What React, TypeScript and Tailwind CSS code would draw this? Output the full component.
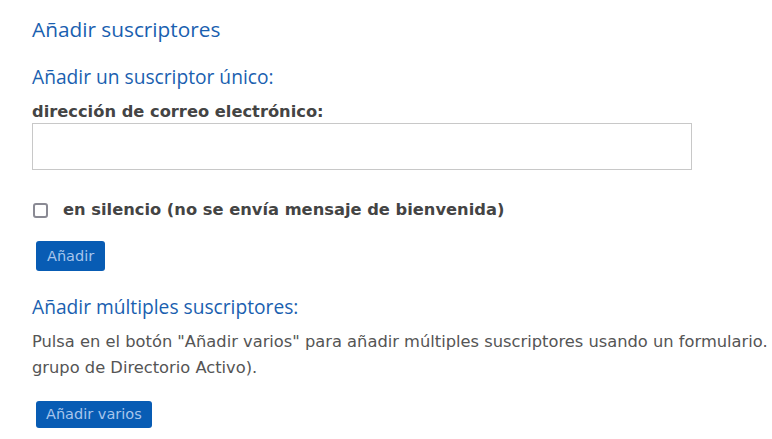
import React from "react";

export default function App() {
  const heading = "text-[#1a5fb0] font-normal [font-family:'Open_Sans',sans-serif]";
  return (
    <div className="w-[772px] h-[439px] overflow-hidden bg-white [font-family:'DejaVu_Sans',sans-serif]">
      <div className="pl-[32px] pt-[14px] w-[1100px]">
        <h1 className={`${heading} text-[20.8px] leading-[30px]`}>Añadir suscriptores</h1>
        <h2 className={`${heading} text-[19.2px] leading-[26px] mt-[20px]`}>Añadir un suscriptor único:</h2>
        <label className="block mt-[12px] text-[16.3px] leading-[20px] font-bold text-[#444]">
          dirección de correo electrónico:
        </label>
        <input
          type="text"
          className="block mt-[1px] w-[660px] h-[47px] border border-[#c8c8c8] bg-white outline-none"
        />
        <div className="flex items-center mt-[30px] h-[20px]">
          <span className="w-[15px] h-[15px] ml-[1px] border-2 border-[#8a8a94] rounded-[3px] bg-white" />
          <span className="ml-[15px] text-[16.3px] font-bold text-[#444]">
            en silencio (no se envía mensaje de bienvenida)
          </span>
        </div>
        <button className="mt-[21px] ml-[4px] h-[30px] px-[11px] rounded-[3px] bg-[#085cb4] text-[#a7c5ec] text-[14.5px] leading-[30px]">
          Añadir
        </button>
        <h2 className={`${heading} text-[19.2px] leading-[26px] mt-[23px]`}>Añadir múltiples suscriptores:</h2>
        <div className="mt-[9px] text-[16.3px] leading-[26px] text-[#555]">
          <div className="whitespace-nowrap">
            Pulsa en el botón "Añadir varios" para añadir múltiples suscriptores usando un formulario. (Puede también importar desde un
          </div>
          <div>grupo de Directorio Activo).</div>
        </div>
        <button className="mt-[20px] ml-[4px] h-[27px] px-[10px] rounded-[3px] bg-[#085cb4] text-[#a7c5ec] text-[14.5px] leading-[27px]">
          Añadir varios
        </button>
      </div>
    </div>
  );
}
